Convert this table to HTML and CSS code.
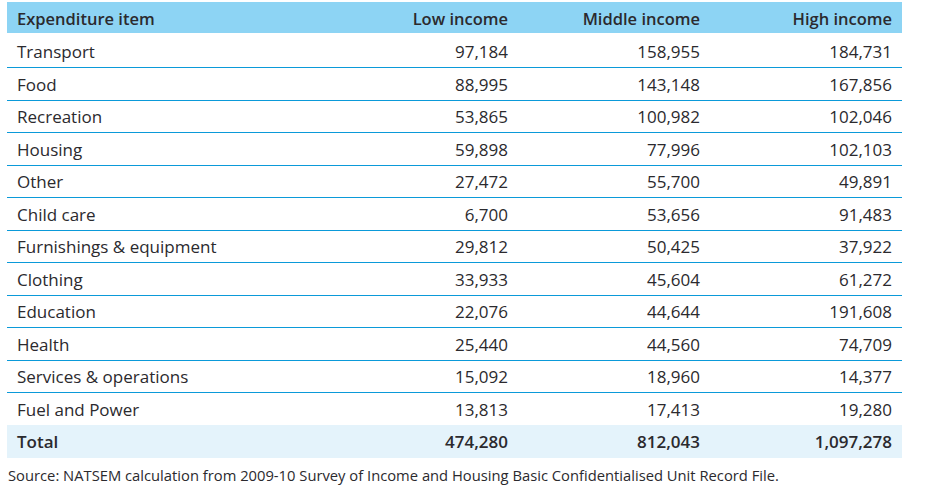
FILE: index.html
```html
<!DOCTYPE html>
<html lang="en">
<head>
<meta charset="utf-8">
<title>Expenditure by income</title>
<link rel="stylesheet" href="styles.css">
</head>
<body>
<div class="page">
  <table class="exp">
    <colgroup>
      <col class="c-item"><col class="c-num"><col class="c-num"><col class="c-num">
    </colgroup>
    <thead>
      <tr><th class="item">Expenditure item</th><th>Low income</th><th>Middle income</th><th>High income</th></tr>
    </thead>
    <tbody>
      <tr class="first"><td class="item">Transport</td><td>97,184</td><td>158,955</td><td>184,731</td></tr>
      <tr><td class="item">Food</td><td>88,995</td><td>143,148</td><td>167,856</td></tr>
      <tr><td class="item">Recreation</td><td>53,865</td><td>100,982</td><td>102,046</td></tr>
      <tr><td class="item">Housing</td><td>59,898</td><td>77,996</td><td>102,103</td></tr>
      <tr><td class="item">Other</td><td>27,472</td><td>55,700</td><td>49,891</td></tr>
      <tr><td class="item">Child care</td><td>6,700</td><td>53,656</td><td>91,483</td></tr>
      <tr><td class="item">Furnishings &amp; equipment</td><td>29,812</td><td>50,425</td><td>37,922</td></tr>
      <tr><td class="item">Clothing</td><td>33,933</td><td>45,604</td><td>61,272</td></tr>
      <tr><td class="item">Education</td><td>22,076</td><td>44,644</td><td>191,608</td></tr>
      <tr><td class="item">Health</td><td>25,440</td><td>44,560</td><td>74,709</td></tr>
      <tr><td class="item">Services &amp; operations</td><td>15,092</td><td>18,960</td><td>14,377</td></tr>
      <tr class="last"><td class="item">Fuel and Power</td><td>13,813</td><td>17,413</td><td>19,280</td></tr>
    </tbody>
    <tfoot>
      <tr><td class="item">Total</td><td>474,280</td><td>812,043</td><td>1,097,278</td></tr>
    </tfoot>
  </table>
  <p class="source">Source: NATSEM calculation from 2009-10 Survey of Income and Housing Basic Confidentialised Unit Record File.</p>
</div>
</body>
</html>
```
FILE: styles.css
```css
html, body {
  margin: 0;
  padding: 0;
  background: #ffffff;
}
body {
  font-family: "Open Sans", "Noto Sans", "Liberation Sans", sans-serif;
  color: #2b2a2e;
}
.page {
  padding: 2px 0 0 7px;
}
.exp {
  border-collapse: collapse;
  table-layout: fixed;
  width: 895px;
  font-size: 17px;
}
.c-item { width: 319px; }
.c-num { width: 192px; }
.exp th, .exp td {
  padding: 0 10px;
  text-align: right;
  white-space: nowrap;
  line-height: 22px;
}
.exp .item { text-align: left; }
.exp thead th {
  background: #8dd4f4;
  font-weight: 600;
  font-size: 16.5px;
  height: 29px;
  padding-top: 2px;
}
.exp tbody td {
  height: 29.5px;
  border-bottom: 1px solid #0b9ad9;
  padding-top: 2px;
}
.exp tbody tr.first td { height: 31px; padding-top: 3px; }
.exp tbody tr.last td {
  border-bottom: none;
  height: 30px;
}
.exp tfoot td {
  background: #e4f3fb;
  font-weight: 600;
  height: 32px;
  padding-top: 1px;
}
.source {
  margin: 7px 0 0 1px;
  font-size: 14.75px;
}
```
